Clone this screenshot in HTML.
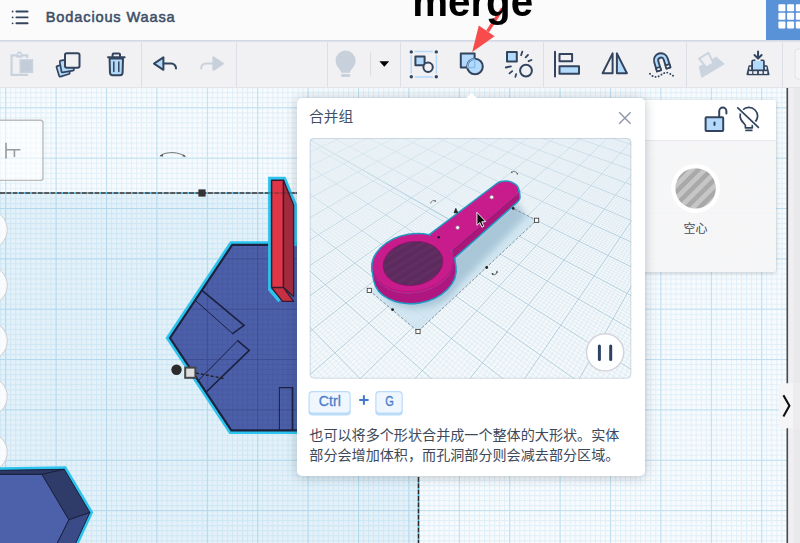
<!DOCTYPE html>
<html><head><meta charset="utf-8"><title>Tinkercad</title><style>
html,body{margin:0;padding:0;}
body{width:800px;height:543px;overflow:hidden;position:relative;background:#fff;font-family:"Liberation Sans",sans-serif;}
.abs{position:absolute;}
#hdr{left:0;top:0;width:800px;height:40px;background:#fbfbfb;}
#hdrb{left:0;top:40px;width:800px;height:2px;background:linear-gradient(#cfd4e1,#e2e5ed);}
#tb{left:0;top:42px;width:800px;height:45px;background:#f1f1f3;}
#tbb{left:0;top:87px;width:800px;height:1px;background:#e2e4ea;}
.sep{top:42px;width:1px;height:45px;background:#dddfe6;}
#title{left:45.8px;top:6.6px;font-size:14.6px;font-weight:normal;color:#3e5069;white-space:nowrap;letter-spacing:0.84px;line-height:20px;-webkit-text-stroke:0.55px #3e5069;}
#merge{left:412.2px;top:-20.5px;font-size:40.3px;font-weight:bold;color:#000;white-space:nowrap;line-height:46px;height:46px;transform:scale(1,1.05);transform-origin:0 36.9px;}
#apps{left:766px;top:0;width:34px;height:40px;background:#5a92d8;}
svg{position:absolute;left:0;top:0;overflow:visible;}
</style></head><body>
<svg id="cv" width="800" height="543" viewBox="0 0 800 543" style="z-index:0">
<defs>
<pattern id="gmin" x="5.2" y="6.6" width="5.04" height="5.035" patternUnits="userSpaceOnUse"><path d="M0.5 0V5.04M0 0.5H5.04" stroke="#e0eff8" stroke-width="1" fill="none"/></pattern>
<pattern id="gmaj" x="5.2" y="6.6" width="50.4" height="50.35" patternUnits="userSpaceOnUse"><path d="M0.5 0V50.4M0 0.5H50.4" stroke="#bfdff0" stroke-width="1.1" fill="none"/></pattern>
</defs>
<rect x="0" y="88" width="800" height="455" fill="#f8fbfd"/>
<filter id="gb" x="0" y="0" width="100%" height="100%"><feGaussianBlur stdDeviation="0.55"/></filter>
<g filter="url(#gb)"><rect x="-5" y="80" width="810" height="470" fill="url(#gmin)"/>
<rect x="-5" y="80" width="810" height="470" fill="url(#gmaj)"/></g>
<rect x="0" y="193" width="418.5" height="350" fill="rgb(100,180,228)" fill-opacity="0.135"/>
<path d="M0 193H297" stroke="#2a2a2a" stroke-width="1.6" stroke-dasharray="5 1.3" fill="none"/>
<path d="M0 193H297" stroke="#35b6e6" stroke-width="1.6" stroke-dasharray="1.3 5" stroke-dashoffset="-5" fill="none"/>
<path d="M418.5 477V543" stroke="#2a2a2a" stroke-width="1.6" stroke-dasharray="5 1.3" fill="none"/>
<path d="M418.5 477V543" stroke="#35b6e6" stroke-width="1.6" stroke-dasharray="1.3 5" stroke-dashoffset="-5" fill="none"/>
<rect x="198.4" y="189.4" width="7.2" height="7.2" fill="#333"/>
<path d="M160 155.8C164 153 168 152.6 173 152.6C178 152.8 182 154.4 185.5 156.6" stroke="#777" stroke-width="1" fill="none"/><path d="M159.4 156.2l3.4-2.2l0.4 2.4zM185.8 156.8l-3.6-0.6l1.4-2z" fill="#555"/>
<rect x="-5" y="120.2" width="48" height="60.2" rx="2.5" fill="rgba(255,255,255,0.55)" stroke="#bcbcbc" stroke-width="1.4"/>
<path d="M6 142.7V158.6M6 149.8H20.3M14.4 149.8V157" stroke="#9a9a9a" stroke-width="1.6" fill="none"/>
<circle cx="-12.3" cy="229.6" r="19.6" fill="rgba(255,255,255,0.8)" stroke="#cfcfcf" stroke-width="1"/>
<circle cx="-12.3" cy="285.3" r="19.6" fill="rgba(255,255,255,0.8)" stroke="#cfcfcf" stroke-width="1"/>
<circle cx="-12.3" cy="340.9" r="19.6" fill="rgba(255,255,255,0.8)" stroke="#cfcfcf" stroke-width="1"/>
<circle cx="-12.3" cy="396.5" r="19.6" fill="rgba(255,255,255,0.8)" stroke="#cfcfcf" stroke-width="1"/>
<circle cx="-12.3" cy="452.1" r="19.6" fill="rgba(255,255,255,0.8)" stroke="#cfcfcf" stroke-width="1"/>
<g stroke-linejoin="miter">
<path d="M232.2 244.9L170 338L231.3 430.3H300V244.9Z" fill="#4c5fa9" stroke="#2cc4ee" stroke-width="7.4"/>
<path d="M232.2 244.9L170 338L231.3 430.3H300V244.9Z" fill="#4c5fa9" stroke="#1c2340" stroke-width="2.2"/>
</g>
<defs><pattern id="hmin" x="5.2" y="6.6" width="5.04" height="5.035" patternUnits="userSpaceOnUse"><path d="M0.5 0V5.04M0 0.5H5.04" stroke="#2b3a80" stroke-width="1" fill="none"/></pattern>
<pattern id="hmaj" x="5.2" y="6.6" width="50.4" height="50.35" patternUnits="userSpaceOnUse"><path d="M0.5 0V50.4M0 0.5H50.4" stroke="#24326e" stroke-width="1.2" fill="none"/></pattern></defs>
<clipPath id="hexc"><path d="M232.8 246L171.3 338L232 429.2H300V246Z"/></clipPath>
<g clip-path="url(#hexc)"><rect x="150" y="240" width="150" height="200" fill="url(#hmin)" opacity="0.16"/><rect x="150" y="240" width="150" height="200" fill="url(#hmaj)" opacity="0.3"/></g>
<g fill="none" stroke="#1b2140" stroke-linecap="round">
<path d="M202 290.3L244 325.3" stroke-width="1.7"/><path d="M195.3 300.4L232.6 333.6" stroke-width="1"/><path d="M232.6 333.6L244 325.3" stroke-width="1.5"/>
<path d="M249.2 350.3L206.7 391.5" stroke-width="1.7"/><path d="M237.6 340.7L197.7 381.2" stroke-width="1"/><path d="M237.6 340.7L249.2 350.3" stroke-width="1.5"/>
<path d="M292.5 387.6V430" stroke-width="1.7"/><path d="M279.4 387.6V430" stroke-width="1"/><path d="M279.4 387.6H292.5" stroke-width="1.3"/>
</g>
<g stroke-linejoin="round">
<path d="M279.6 301.2L269.8 289.6V178.5H284.4L295.2 204.6V246" fill="none" stroke="#2cc4ee" stroke-width="3.4" stroke-linejoin="miter"/>
<path d="M271.6 180.2H283.5V287.6H271.6Z" fill="#e03546" stroke="#3a1a30" stroke-width="1.5"/>
<path d="M283.5 180.2L293.6 205V296.5L283.5 287.6Z" fill="#a52b3c" stroke="#3a1a30" stroke-width="1.3"/>
<path d="M271.6 287.6H283.5L293.7 301.4H282.6Z" fill="#c73042" stroke="#3a1a30" stroke-width="1.3"/>
</g>
<path d="M268 193H297" stroke="#2a2a2a" stroke-width="1.2" stroke-dasharray="5 1.3" fill="none" opacity="0.55"/>
<path d="M196 373L225 378.8" stroke="#222" stroke-width="1.4" stroke-dasharray="3 2" fill="none"/>
<circle cx="176.5" cy="369.8" r="5.2" fill="#2b2b2b"/>
<rect x="185.2" y="367.6" width="10.2" height="10.2" fill="#dedede" stroke="#454545" stroke-width="2"/>
<g stroke-linejoin="miter">
<path d="M-5 470.4L64.3 469.3L89.9 512.5L74.4 546H-5Z" fill="#2cc4ee" stroke="#2cc4ee" stroke-width="6"/>
</g><g stroke-linejoin="round">
<path d="M-5 470.4L64.3 469.3L41.9 474.4H-5Z" fill="#2d3964" stroke="#1a2140" stroke-width="1"/>
<path d="M41.9 474.4L64.3 469.3L89.9 512.5L68.8 519.8Z" fill="#2f3c69" stroke="#1a2140" stroke-width="1"/>
<path d="M68.8 519.8L89.9 512.5L74.4 546H55.7Z" fill="#3b4b88" stroke="#1a2140" stroke-width="1"/>
<path d="M-5 474.4H41.9L68.8 519.8L55.7 546H-5Z" fill="#4d60aa" stroke="#1a2140" stroke-width="1"/>
</g>
<rect x="788" y="88" width="12" height="455" fill="#efeff1"/>
<rect x="793.5" y="88" width="6.5" height="455" fill="#e9e9eb"/>
<rect x="786.5" y="88" width="1.6" height="455" fill="#4a4a4a"/>
<path d="M800 383.3H781.5a2.8 2.8 0 0 0 -2.8 2.8V425.5a2.8 2.8 0 0 0 2.8 2.8H800Z" fill="#f5f5f7"/>
<rect x="793.2" y="383.3" width="7" height="45" fill="#ececee"/>
<path d="M783.4 395.2L789.4 405.8L783.4 416.4" fill="none" stroke="#111" stroke-width="2.1"/>
</svg>
<div class="abs" style="left:600px;top:100px;width:175.5px;height:171.5px;background:rgba(245,245,247,0.94);border-radius:0 3px 3px 0;box-shadow:0 1px 4px rgba(30,40,60,0.22);z-index:1"></div>
<div class="abs" style="left:600px;top:100px;width:175.5px;height:39.5px;background:#fff;border-bottom:1px solid #e6e8ee;border-radius:0 3px 0 0;z-index:1"></div>
<svg width="800" height="543" viewBox="0 0 800 543" style="z-index:2">
<path d="M719.2 117V111.2a3.6 3.6 0 0 1 7.2 0V113.4" fill="none" stroke="#33455e" stroke-width="2" stroke-linecap="round"/>
<rect x="705.6" y="117.2" width="17.6" height="13.8" rx="0.8" fill="#b3d9fb" stroke="#33455e" stroke-width="2"/>
<rect x="713.5" y="121.5" width="2" height="4.6" rx="1" fill="#33455e"/>
<path d="M745.4 127.8V125.6C745.4 123.6 740.1 121.6 740.1 116.2a8.75 8.75 0 0 1 17.5 0C757.6 121.6 752.3 123.6 752.3 125.6V127.8Z" fill="none" stroke="#33455e" stroke-width="1.7" stroke-linejoin="round"/>
<path d="M746 130.4H751.8" stroke="#33455e" stroke-width="1.7" stroke-linecap="round"/>
<path d="M737.8 107.8L758.4 127.4" stroke="#fff" stroke-width="4.6"/><path d="M737.8 107.8L758.4 127.4" stroke="#33455e" stroke-width="1.7" stroke-linecap="round"/>
<defs><pattern id="stripe" width="9.2" height="9.2" patternUnits="userSpaceOnUse" patternTransform="rotate(-45 695.6 188.4)"><rect width="9.2" height="9.2" fill="#c6c6c6"/><rect y="0" width="9.2" height="4.6" fill="#a9a9a9"/></pattern></defs>
<circle cx="695.6" cy="188.4" r="24.5" fill="#fff"/><circle cx="695.6" cy="188.4" r="20.2" fill="url(#stripe)"/>
<text x="683.5" y="233.4" font-family="'Liberation Sans','Noto Sans CJK SC',sans-serif" font-size="12" fill="#434c5a">空心</text>
</svg>
<div id="hdr" class="abs" style="z-index:3"></div><div id="hdrb" class="abs" style="z-index:3"></div>
<div id="tb" class="abs" style="z-index:3"></div><div id="tbb" class="abs" style="z-index:3"></div>
<div class="abs sep" style="left:140.6px;z-index:3"></div>
<div class="abs sep" style="left:236.0px;z-index:3"></div>
<div class="abs sep" style="left:327.0px;z-index:3"></div>
<div class="abs sep" style="left:399.6px;z-index:3"></div>
<div class="abs sep" style="left:543.0px;z-index:3"></div>
<div class="abs sep" style="left:686.0px;z-index:3"></div>
<div class="abs sep" style="left:782.3px;z-index:3"></div>
<div id="title" class="abs" style="z-index:4">Bodacious Waasa</div>
<div id="apps" class="abs" style="z-index:4"></div>
<div id="merge" class="abs" style="z-index:7">merge</div>
<svg id="ico" width="800" height="543" viewBox="0 0 800 543" style="z-index:5">
<path d="M16.4 11.5H27.6" stroke="#33455e" stroke-width="1.9" stroke-linecap="round"/><circle cx="12.6" cy="11.5" r="0.9" fill="#33455e"/>
<path d="M16.4 17.4H27.6" stroke="#33455e" stroke-width="1.9" stroke-linecap="round"/><circle cx="12.6" cy="17.4" r="0.9" fill="#33455e"/>
<path d="M16.4 23.3H27.6" stroke="#33455e" stroke-width="1.9" stroke-linecap="round"/><circle cx="12.6" cy="23.3" r="0.9" fill="#33455e"/>
<rect x="778.4" y="4.2" width="7" height="7" rx="0.8" fill="#fff"/>
<rect x="787.1" y="4.2" width="7" height="7" rx="0.8" fill="#fff"/>
<rect x="795.8" y="4.2" width="7" height="7" rx="0.8" fill="#fff"/>
<rect x="778.4" y="12.8" width="7" height="7" rx="0.8" fill="#fff"/>
<rect x="787.1" y="12.8" width="7" height="7" rx="0.8" fill="#fff"/>
<rect x="795.8" y="12.8" width="7" height="7" rx="0.8" fill="#fff"/>
<rect x="778.4" y="21.4" width="7" height="7" rx="0.8" fill="#fff"/>
<rect x="787.1" y="21.4" width="7" height="7" rx="0.8" fill="#fff"/>
<rect x="795.8" y="21.4" width="7" height="7" rx="0.8" fill="#fff"/>
<path d="M27.2 58V55.4H11.55V74.85H28.1" fill="none" stroke="#c8d2dd" stroke-width="2.1" stroke-linejoin="miter"/>
<rect x="16.9" y="51.4" width="4.9" height="6.2" rx="2.2" fill="#c8d2dd"/><rect x="16.1" y="54.6" width="6.4" height="3" rx="0.6" fill="#c8d2dd"/>
<rect x="17.9" y="53.5" width="2.9" height="1.8" rx="0.9" fill="#eceef2"/>
<rect x="19.5" y="59.1" width="13.7" height="14" fill="#c9d3de"/><rect x="21" y="60.6" width="10.7" height="11" fill="#c3cdd9"/>
<g stroke="#33455e" stroke-width="1.7" stroke-linejoin="round">
<rect x="57.6" y="64.6" width="11" height="11" rx="1" fill="#b3d9fb" transform="rotate(-17 63 70)"/>
<rect x="60.6" y="59.6" width="12.6" height="12" rx="1" fill="#b3d9fb" transform="rotate(-10 67 66)"/>
<rect x="65" y="53.2" width="14.5" height="14.6" rx="1.8" fill="#f1f1f3" stroke-width="2"/>
</g>
<g stroke="#33455e" stroke-width="2" stroke-linejoin="round" stroke-linecap="round">
<path d="M112.6 56.6V54.6a1 1 0 0 1 1 -1H119a1 1 0 0 1 1 1V56.6" fill="none"/>
<path d="M109.6 58.6H123L122.6 72.6a2.6 2.6 0 0 1 -2.6 2.6H112.6a2.6 2.6 0 0 1 -2.6 -2.6Z" fill="#b3d9fb"/>
<path d="M108 57.2H124.6" fill="none"/>
<path d="M113.8 62V71.4M118.8 62V71.4" stroke-width="1.5" fill="none"/>
</g>
<g stroke="#33455e" stroke-width="2" stroke-linejoin="round" stroke-linecap="round">
<path d="M154 63.6L163.4 57.4V69.8Z" fill="#b3d9fb"/>
<path d="M163.6 63.6H171.4a4.6 4.6 0 0 1 4.6 4.6V68.4" fill="none"/>
</g>
<g stroke="#c7d0db" stroke-width="2" stroke-linejoin="round" stroke-linecap="round">
<path d="M222.8 63.6L213.4 57.4V69.8Z" fill="#c7d0db"/>
<path d="M213.2 63.6H205.8a4.6 4.6 0 0 0 -4.6 4.6V68.4" fill="none"/>
</g>
<g fill="#c7d0db">
<path d="M341.2 72.8C341 69.5 335.6 67 335.6 60.6a10 10 0 0 1 20 0C355.6 67 350.2 69.5 350 72.8Z"/>
<rect x="341" y="74" width="9.4" height="2.9" rx="1.4"/>
</g>
<rect x="370.1" y="52.5" width="1" height="23" fill="#d9dbe2"/>
<path d="M379.4 61.2H389.2L384.3 66.8Z" fill="#000"/>
<g stroke="#b3d9fb" stroke-width="1.5" fill="none" stroke-linecap="round"><path d="M415.2 51.6H432.4M415.2 77H432.4M411.2 55.6V73M436.4 55.6V73"/></g>
<circle cx="411.3" cy="51.9" r="1.7" fill="#33455e"/>
<circle cx="436.3" cy="51.9" r="1.7" fill="#33455e"/>
<circle cx="411.3" cy="76.7" r="1.7" fill="#33455e"/>
<circle cx="436.3" cy="76.7" r="1.7" fill="#33455e"/>
<rect x="415.4" y="56.6" width="9.2" height="8.6" fill="#b3d9fb" stroke="#33455e" stroke-width="2" stroke-linejoin="round"/>
<circle cx="428.1" cy="67.3" r="4.7" fill="#f1f1f3" stroke="#33455e" stroke-width="2"/>
<rect x="460.8" y="53.5" width="13.8" height="14" fill="#b3d9fb" stroke="#33455e" stroke-width="2" stroke-linejoin="round"/>
<circle cx="475" cy="66.5" r="7.8" fill="#b3d9fb" stroke="#33455e" stroke-width="2"/>
<path d="M474.6 59V67.5H467.4" fill="none" stroke="#86bff2" stroke-width="1.4"/>
<path d="M467.4 67.5a7.6 7.6 0 0 1 7.2 -8.6" fill="none" stroke="#86bff2" stroke-width="1.2"/>
<rect x="507" y="52" width="9.8" height="9.5" fill="#b3d9fb" stroke="#33455e" stroke-width="2" stroke-linejoin="round"/>
<circle cx="526" cy="70.6" r="5.9" fill="none" stroke="#33455e" stroke-width="2"/>
<path d="M522.3 51.6L521.1 55.2M528 54.9L525.7 57.4M531.5 60L528.6 61.2M505.8 67.5L510.9 66.3M509.5 73.4L512.2 71.1M515.4 76.8L516.2 74.1" stroke="#33455e" stroke-width="1.8" stroke-linecap="round" fill="none"/>
<path d="M555 51.8V76.4" stroke="#33455e" stroke-width="2" stroke-linecap="round"/>
<rect x="559.5" y="54.1" width="12.6" height="7.2" fill="#f1f1f3" stroke="#33455e" stroke-width="2" stroke-linejoin="round"/>
<rect x="559.5" y="66.2" width="19.5" height="7.6" fill="#b3d9fb" stroke="#33455e" stroke-width="2" stroke-linejoin="round"/>
<path d="M612.6 53.4V73.2H602.6Z" fill="#f1f1f3" stroke="#33455e" stroke-width="2" stroke-linejoin="round"/>
<path d="M616.9 53.4V73.2H626.9Z" fill="#b3d9fb" stroke="#33455e" stroke-width="2" stroke-linejoin="round"/>
<g transform="rotate(-17 661 60.4)">
<path d="M654 69.8V60.2a7 7 0 0 1 14 0V69.8H663.8V60.4a2.8 2.8 0 0 0 -5.6 0V69.8Z" fill="#b3d9fb" stroke="#33455e" stroke-width="1.9" stroke-linejoin="round"/>
<rect x="654" y="66.4" width="4.2" height="3.4" fill="#fff" stroke="#33455e" stroke-width="1.7" stroke-linejoin="round"/>
<rect x="663.8" y="66.4" width="4.2" height="3.4" fill="#fff" stroke="#33455e" stroke-width="1.7" stroke-linejoin="round"/>
</g>
<path d="M650 73.8C653 77.4 657 77.6 660 75.6C663 73.6 665.4 71.6 668.4 73C670.6 74 672.6 75.4 674.4 76.6" fill="none" stroke="#33455e" stroke-width="1.9" stroke-linecap="round" stroke-dasharray="0.1 3.1"/>
<path d="M699.2 66.8L716.4 57.2L724.2 64L701.8 77.3Z" fill="#cbd4de" stroke="#cbd4de" stroke-width="1" stroke-linejoin="round"/>
<path d="M699.1 58.6L708.4 52.9L713.5 63.3L706.2 67.4Z" fill="#efeff3" stroke="#cbd4de" stroke-width="2" stroke-linejoin="round"/>
<g stroke="#33455e" stroke-width="2" stroke-linecap="round" stroke-linejoin="round" fill="none">
<path d="M758.05 51.5V58.2M754.5 55L758.05 58.6L761.6 55"/>
</g>
<path d="M749.3 66.1H766.7L768.6 74.3H747.4Z" fill="#33455e" stroke="#33455e" stroke-width="1.8" stroke-linejoin="round"/>
<path d="M752.2 70V61.4a1 1 0 0 1 1 -1H755.4M763.8 70V61.4a1 1 0 0 0 -1 -1H760.6" fill="none" stroke="#33455e" stroke-width="2" stroke-linejoin="round"/>
<rect x="753" y="61" width="10.1" height="8.8" fill="#b3d9fb"/>
<rect x="752.2" y="69.6" width="11.6" height="1.2" fill="#33455e"/>
<rect x="748.8" y="71.2" width="3.4" height="2.7" fill="#eef0f4"/>
<rect x="753.4" y="71.2" width="3.7" height="2.7" fill="#eef0f4"/>
<rect x="758.9" y="71.2" width="3.6" height="2.7" fill="#eef0f4"/>
<rect x="763.9" y="71.2" width="3.4" height="2.7" fill="#eef0f4"/>
<rect x="749.4" y="66.8" width="1.7" height="2.8" fill="#eef0f4"/><rect x="764.9" y="66.8" width="1.7" height="2.8" fill="#eef0f4"/>
<rect x="795" y="49" width="12" height="30" rx="3" fill="#f5f5f7" stroke="#e2e2e8" stroke-width="1"/>
</svg>
<svg width="800" height="543" viewBox="0 0 800 543" style="z-index:6"><path d="M502.5 8.5L487.6 31.4" stroke="#f84b4b" stroke-width="3.4" fill="none"/><path d="M472.2 52L478.8 25.6L494.6 36.2Z" fill="#f84b4b"/></svg>
<div class="abs" style="left:297.3px;top:98.4px;width:347.4px;height:378px;background:#fff;border-radius:5px;box-shadow:0 1px 11px rgba(40,60,80,0.30);z-index:8"></div>
<svg width="800" height="543" viewBox="0 0 800 543" style="z-index:9">
<path d="M465.6 98.9L471.6 92.4L477.6 98.9Z" fill="#fff"/>
<text x="309" y="122" font-family="'Liberation Sans','Noto Sans CJK SC',sans-serif" font-size="14.7" fill="#405068">合并组</text>
<path d="M619.2 112.3L630.6 123.7M630.6 112.3L619.2 123.7" stroke="#8f98a7" stroke-width="1.4" fill="none"/>
<defs><clipPath id="imgc"><rect x="309.7" y="138.0" width="321.6" height="240.7" rx="4"/></clipPath>
<filter id="b1" x="-5%" y="-5%" width="110%" height="110%"><feGaussianBlur stdDeviation="0.45"/></filter>
<filter id="b3" x="-20%" y="-20%" width="140%" height="140%"><feGaussianBlur stdDeviation="3"/></filter>
<pattern id="hstripe" width="7" height="7" patternUnits="userSpaceOnUse" patternTransform="rotate(-22)"><rect width="7" height="7" fill="#5b2b5d"/><rect width="7" height="3.2" fill="#602f61"/></pattern>
</defs>
<g clip-path="url(#imgc)">
<rect x="309.7" y="138.0" width="321.6" height="240.7" fill="#f3f8fb"/>
<path d="M307.7 136.3L308.3 136.0M307.7 137.4L310.9 136.0M307.7 138.5L313.6 136.0M307.7 139.7L316.2 136.0M307.7 142.0L321.5 136.0M307.7 143.2L324.2 136.0M307.7 144.4L326.8 136.0M307.7 145.6L329.4 136.0M307.7 146.8L332.1 136.0M307.7 148.0L334.7 136.0M307.7 149.3L337.4 136.0M307.7 150.5L340.0 136.0M307.7 151.8L342.7 136.0M307.7 154.4L347.9 136.0M307.7 155.7L350.6 136.0M307.7 157.1L353.2 136.0M307.7 158.4L355.9 136.0M307.7 159.8L358.5 136.0M307.7 161.1L361.2 136.0M307.7 162.5L363.8 136.0M307.7 163.9L366.4 136.0M307.7 165.3L369.1 136.0M307.7 168.2L374.4 136.0M307.7 169.7L377.0 136.0M307.7 171.2L379.7 136.0M307.7 172.7L382.3 136.0M307.7 174.2L385.0 136.0M307.7 175.7L387.6 136.0M307.7 177.3L390.2 136.0M307.7 178.9L392.9 136.0M307.7 180.5L395.5 136.0M307.7 183.7L400.8 136.0M307.7 185.3L403.5 136.0M307.7 187.0L406.1 136.0M307.7 188.7L408.7 136.0M307.7 190.4L411.4 136.0M307.7 192.1L414.0 136.0M307.7 193.9L416.7 136.0M307.7 195.7L419.3 136.0M307.7 197.5L422.0 136.0M307.7 201.1L427.2 136.0M307.7 203.0L429.9 136.0M307.7 204.9L432.5 136.0M307.7 206.8L435.2 136.0M307.7 208.8L437.8 136.0M307.7 210.7L440.5 136.0M307.7 212.7L443.1 136.0M307.7 214.7L445.7 136.0M307.7 216.8L448.4 136.0M307.7 221.0L453.7 136.0M307.7 223.1L456.3 136.0M307.7 225.3L459.0 136.0M307.7 227.4L461.6 136.0M307.7 229.7L464.3 136.0M307.7 231.9L466.9 136.0M307.7 234.2L469.5 136.0M307.7 236.5L472.2 136.0M307.7 238.9L474.8 136.0M307.7 243.7L480.1 136.0M307.7 246.1L482.8 136.0M307.7 248.6L485.4 136.0M307.7 251.1L488.0 136.0M307.7 253.7L490.7 136.0M307.7 256.3L493.3 136.0M307.7 259.0L496.0 136.0M307.7 261.7L498.6 136.0M307.7 264.4L501.3 136.0M307.7 270.0L506.5 136.0M307.7 272.8L509.2 136.0M307.7 275.7L511.8 136.0M307.7 278.7L514.5 136.0M307.7 281.7L517.1 136.0M307.7 284.7L519.8 136.0M307.7 287.8L522.4 136.0M307.7 291.0L525.0 136.0M307.7 294.2L527.7 136.0M307.7 300.8L533.0 136.0M307.7 304.1L535.6 136.0M307.7 307.6L538.3 136.0M307.7 311.0L540.9 136.0M307.7 314.6L543.6 136.0M307.7 318.2L546.2 136.0M307.7 321.9L548.8 136.0M307.7 325.6L551.5 136.0M307.7 329.5L554.1 136.0M307.7 337.3L559.4 136.0M307.7 341.3L562.1 136.0M307.7 345.5L564.7 136.0M307.7 349.6L567.3 136.0M307.7 353.9L570.0 136.0M307.7 358.3L572.6 136.0M307.7 362.7L575.3 136.0M307.7 367.2L577.9 136.0M307.7 371.9L580.6 136.0M308.5 380.7L585.8 136.0M314.0 380.7L588.5 136.0M319.5 380.7L591.1 136.0M325.0 380.7L593.8 136.0M330.5 380.7L596.4 136.0M336.0 380.7L599.1 136.0M341.5 380.7L601.7 136.0M347.0 380.7L604.3 136.0M352.5 380.7L607.0 136.0M363.5 380.7L612.3 136.0M369.1 380.7L614.9 136.0M374.6 380.7L617.6 136.0M380.1 380.7L620.2 136.0M385.6 380.7L622.9 136.0M391.1 380.7L625.5 136.0M396.6 380.7L628.1 136.0M402.1 380.7L630.8 136.0M407.6 380.7L633.1 136.4M418.6 380.7L633.3 142.0M424.1 380.7L633.3 145.1M429.6 380.7L633.3 148.2M435.1 380.7L633.3 151.4M440.6 380.7L633.3 154.7M446.1 380.7L633.3 158.1M451.6 380.7L633.3 161.6M457.1 380.7L633.3 165.2M462.6 380.7L633.3 169.0M473.7 380.7L633.3 176.7M479.2 380.7L633.3 180.7M484.7 380.7L633.3 184.9M490.2 380.7L633.3 189.2M495.7 380.7L633.3 193.7M501.2 380.7L633.3 198.2M506.7 380.7L633.3 203.0M512.2 380.7L633.3 207.9M517.7 380.7L633.3 212.9M528.7 380.7L633.3 223.6M534.2 380.7L633.3 229.2M539.7 380.7L633.3 235.0M545.2 380.7L633.3 241.0M550.7 380.7L633.3 247.3M556.2 380.7L633.3 253.8M561.7 380.7L633.3 260.5M567.2 380.7L633.3 267.5M572.8 380.7L633.3 274.9M583.8 380.7L633.3 290.4M589.3 380.7L633.3 298.7M594.8 380.7L633.3 307.4M600.3 380.7L633.3 316.4M605.8 380.7L633.3 325.9M611.3 380.7L633.3 335.8M616.8 380.7L633.3 346.2M622.3 380.7L633.3 357.1M627.8 380.7L633.3 368.6M307.7 375.9L311.9 380.7M307.7 367.9L319.0 380.7M307.7 360.2L326.2 380.7M307.7 352.7L333.4 380.7M307.7 345.4L340.6 380.7M307.7 338.4L347.7 380.7M307.7 331.6L354.9 380.7M307.7 318.7L369.2 380.7M307.7 312.5L376.4 380.7M307.7 306.5L383.6 380.7M307.7 300.7L390.8 380.7M307.7 295.1L397.9 380.7M307.7 289.6L405.1 380.7M307.7 284.2L412.3 380.7M307.7 279.1L419.4 380.7M307.7 274.0L426.6 380.7M307.7 264.3L441.0 380.7M307.7 259.7L448.1 380.7M307.7 255.1L455.3 380.7M307.7 250.7L462.5 380.7M307.7 246.4L469.6 380.7M307.7 242.2L476.8 380.7M307.7 238.1L484.0 380.7M307.7 234.1L491.2 380.7M307.7 230.2L498.3 380.7M307.7 222.7L512.7 380.7M307.7 219.1L519.8 380.7M307.7 215.5L527.0 380.7M307.7 212.1L534.2 380.7M307.7 208.7L541.4 380.7M307.7 205.4L548.5 380.7M307.7 202.1L555.7 380.7M307.7 199.0L562.9 380.7M307.7 195.9L570.0 380.7M307.7 189.8L584.4 380.7M307.7 186.9L591.6 380.7M307.7 184.1L598.7 380.7M307.7 181.3L605.9 380.7M307.7 178.6L613.1 380.7M307.7 175.9L620.2 380.7M307.7 173.2L627.4 380.7M307.7 170.7L633.3 379.9M307.7 168.1L633.3 375.3M307.7 163.2L633.3 366.5M307.7 160.8L633.3 362.2M307.7 158.5L633.3 357.9M307.7 156.2L633.3 353.8M307.7 154.0L633.3 349.7M307.7 151.7L633.3 345.7M307.7 149.6L633.3 341.8M307.7 147.4L633.3 338.0M307.7 145.3L633.3 334.2M307.7 141.2L633.3 326.8M307.7 139.2L633.3 323.2M307.7 137.3L633.3 319.7M308.9 136.1L633.3 316.2M312.3 136.0L633.3 312.8M315.7 136.0L633.3 309.5M319.2 136.0L633.3 306.2M322.6 136.0L633.3 302.9M326.1 136.0L633.3 299.7M332.9 136.0L633.3 293.5M336.4 136.0L633.3 290.5M339.8 136.0L633.3 287.5M343.3 136.0L633.3 284.5M346.7 136.0L633.3 281.6M350.2 136.0L633.3 278.8M353.6 136.0L633.3 276.0M357.0 136.0L633.3 273.2M360.5 136.0L633.3 270.5M367.4 136.0L633.3 265.1M370.8 136.0L633.3 262.5M374.3 136.0L633.3 260.0M377.7 136.0L633.3 257.4M381.1 136.0L633.3 254.9M384.6 136.0L633.3 252.5M388.0 136.0L633.3 250.0M391.5 136.0L633.3 247.7M394.9 136.0L633.3 245.3M401.8 136.0L633.3 240.7M405.3 136.0L633.3 238.4M408.7 136.0L633.3 236.2M412.1 136.0L633.3 234.0M415.6 136.0L633.3 231.8M419.0 136.0L633.3 229.7M422.5 136.0L633.3 227.5M425.9 136.0L633.3 225.5M429.4 136.0L633.3 223.4M436.2 136.0L633.3 219.4M439.7 136.0L633.3 217.4M443.1 136.0L633.3 215.4M446.6 136.0L633.3 213.5M450.0 136.0L633.3 211.6M453.5 136.0L633.3 209.7M456.9 136.0L633.3 207.8M460.3 136.0L633.3 206.0M463.8 136.0L633.3 204.2M470.7 136.0L633.3 200.6M474.1 136.0L633.3 198.9M477.6 136.0L633.3 197.2M481.0 136.0L633.3 195.4M484.4 136.0L633.3 193.8M487.9 136.0L633.3 192.1M491.3 136.0L633.3 190.4M494.8 136.0L633.3 188.8M498.2 136.0L633.3 187.2M505.1 136.0L633.3 184.0M508.6 136.0L633.3 182.5M512.0 136.0L633.3 180.9M515.4 136.0L633.3 179.4M518.9 136.0L633.3 177.9M522.3 136.0L633.3 176.4M525.8 136.0L633.3 175.0M529.2 136.0L633.3 173.5M532.7 136.0L633.3 172.1M539.5 136.0L633.3 169.2M543.0 136.0L633.3 167.8M546.4 136.0L633.3 166.5M549.9 136.0L633.3 165.1M553.3 136.0L633.3 163.8M556.8 136.0L633.3 162.4M560.2 136.0L633.3 161.1M563.6 136.0L633.3 159.8M567.1 136.0L633.3 158.5M574.0 136.0L633.3 156.0M577.4 136.0L633.3 154.7M580.9 136.0L633.3 153.5M584.3 136.0L633.3 152.2M587.7 136.0L633.3 151.0M591.2 136.0L633.3 149.8M594.6 136.0L633.3 148.6M598.1 136.0L633.3 147.4M601.5 136.0L633.3 146.3M608.4 136.0L633.3 144.0M611.9 136.0L633.3 142.8M615.3 136.0L633.3 141.7M618.7 136.0L633.3 140.6M622.2 136.0L633.3 139.5M625.6 136.0L633.3 138.4M629.1 136.0L633.3 137.3M632.5 136.0L633.3 136.2" stroke="#d3e3ed" stroke-width="0.5" fill="none"/>
<path d="M307.7 140.8L318.9 136.0M307.7 153.1L345.3 136.0M307.7 166.8L371.7 136.0M307.7 182.1L398.2 136.0M307.7 199.3L424.6 136.0M307.7 218.9L451.0 136.0M307.7 241.3L477.5 136.0M307.7 267.1L503.9 136.0M307.7 297.4L530.3 136.0M307.7 333.3L556.8 136.0M307.7 376.6L583.2 136.0M358.0 380.7L609.6 136.0M413.1 380.7L633.3 139.0M468.2 380.7L633.3 172.8M523.2 380.7L633.3 218.1M578.3 380.7L633.3 282.5M307.7 325.1L362.1 380.7M307.7 269.1L433.8 380.7M307.7 226.4L505.5 380.7M307.7 192.8L577.2 380.7M307.7 165.7L633.3 370.8M307.7 143.3L633.3 330.5M329.5 136.0L633.3 296.6M363.9 136.0L633.3 267.8M398.4 136.0L633.3 243.0M432.8 136.0L633.3 221.4M467.2 136.0L633.3 202.4M501.7 136.0L633.3 185.6M536.1 136.0L633.3 170.6M570.5 136.0L633.3 157.2M605.0 136.0L633.3 145.1" stroke="#adcbdb" stroke-width="0.9" fill="none"/>
<path d="M308 138.7L448 218.8" stroke="#9dc2d6" stroke-width="1.1" fill="none"/>
<linearGradient id="fade" x1="0" y1="0" x2="0.25" y2="1"><stop offset="0" stop-color="#ecf3f8" stop-opacity="0.75"/><stop offset="0.6" stop-color="#ecf3f8" stop-opacity="0"/></linearGradient>
<rect x="309.7" y="138.0" width="321.6" height="240.7" fill="url(#fade)"/>
<g filter="url(#b1)">
<path d="M369.3 290.4L418 331.5L536.6 220.3L491 197Z" fill="#cde4f0" fill-opacity="0.85"/>
<path d="M385 296C400 314 442 314 458 286L526 216L516 200L452 256Z" fill="#8fb1c8" opacity="0.6" filter="url(#b3)"/>
<path d="M369.3 290.4L418 331.5L536.6 220.3L513.2 208.4" fill="none" stroke="#70808c" stroke-width="0.8" stroke-dasharray="3 1.6"/>
<g stroke="#219bc4" stroke-width="3" stroke-linejoin="round" fill="#219bc4">
<path transform="rotate(-9.5 413.2 263.8)" d="M372.2 263.8a41 29.2 0 0 0 82 0v9.7a41 29.2 0 0 1 -82 0z"/>
<ellipse transform="rotate(-9.5 413.2 263.8)" cx="413.2" cy="263.8" rx="41" ry="29.2"/>
<path d="M452.1 250.6L514.9 196.6C517.4 194.8 518.6 193.2 518.8 191.6L519.3 197.6C519.1 199.4 518.1 200.6 516.9 201.6L453.2 258.2Z"/><path d="M430 235L496.5 184.6C501.4 180.8 509.9 180.8 514.8 184.8C519.2 188.2 519.4 193.2 514.9 196.6L452.1 250.6Z"/>
</g>
<path transform="rotate(-9.5 413.2 263.8)" d="M372.2 263.8a41 29.2 0 0 0 82 0v9.7a41 29.2 0 0 1 -82 0z" fill="#b01580"/>
<path d="M452.1 250.6L514.9 196.6C517.4 194.8 518.6 193.2 518.8 191.6L519.3 197.6C519.1 199.4 518.1 200.6 516.9 201.6L453.2 258.2Z" fill="#ad1479"/>
<path d="M430 235L496.5 184.6C501.4 180.8 509.9 180.8 514.8 184.8C519.2 188.2 519.4 193.2 514.9 196.6L452.1 250.6Z" fill="#c81b8d"/>
<ellipse transform="rotate(-9.5 413.2 263.8)" cx="413.2" cy="263.8" rx="41" ry="29.2" fill="#c81b8d"/>
<path transform="rotate(-9.5 413.2 263.8)" d="M372.4 265a41 29.2 0 0 0 81.6 0" fill="none" stroke="#9c0f6e" stroke-width="0.7" opacity="0.6"/>
<path d="M452.4 250.9L515 197" fill="none" stroke="#8c0c62" stroke-width="0.7" opacity="0.6"/>
<g transform="rotate(-9.5 413 263.5)">
<ellipse cx="413" cy="263.5" rx="30" ry="21.8" fill="url(#hstripe)" stroke="#8a1468" stroke-width="0.8"/>
</g>
<circle cx="491.7" cy="197.2" r="1.9" fill="#fff" stroke="#8a6a80" stroke-width="0.7"/>
<circle cx="457.6" cy="227.6" r="1.9" fill="#fff" stroke="#8a6a80" stroke-width="0.7"/>
<circle cx="438.7" cy="237.3" r="1.3" fill="#3a1030"/>
<path d="M454 212.8L455.8 208.4L457.8 212.8Z" fill="#222" stroke="#222" stroke-width="0.8" stroke-linejoin="round"/>
<rect x="367.2" y="288.3" width="4.2" height="4.2" fill="#fff" stroke="#444" stroke-width="0.9"/>
<rect x="415.9" y="329.4" width="4.2" height="4.2" fill="#fff" stroke="#444" stroke-width="0.9"/>
<rect x="534.5" y="218.2" width="4.2" height="4.2" fill="#fff" stroke="#444" stroke-width="0.9"/>
<circle cx="392.6" cy="309.7" r="1.4" fill="#222"/>
<circle cx="486.7" cy="267.5" r="1.4" fill="#222"/>
<circle cx="513.2" cy="208.4" r="1.4" fill="#222"/>
<path d="M430.6 203.6C431 201 433.4 199.8 435.4 200.8" fill="none" stroke="#666" stroke-width="0.8"/><path d="M436.4 201.6l-2.2 0.2l1-1.8z" fill="#555"/>
<path d="M511.6 172.4C513.4 170.8 516.4 171.4 517.4 173.8" fill="none" stroke="#666" stroke-width="0.8"/><path d="M517.8 175l-1.6-1.4l1.8-0.6z" fill="#555"/><path d="M511 173.2l0.4-2l1.4 1.4z" fill="#555"/>
<path d="M492.2 274C494 275.4 496.6 274.6 497 271.8" fill="none" stroke="#444" stroke-width="0.9"/><path d="M491.4 273l2.2 0.2l-1 1.8zM497 270.4l1 2l-2 0z" fill="#333"/>
<path d="M453.4 254.4V257.6" stroke="#555" stroke-width="0.7"/>
<path d="M476.9 212.3V225.2L479.8 222.6L481.8 227.2L483.8 226.3L481.8 221.8L485.8 221.6Z" fill="#111" stroke="#fff" stroke-width="0.9" stroke-linejoin="round"/>
</g>
<circle cx="605.1" cy="352.3" r="18.6" fill="rgba(255,255,255,0.94)" stroke="#d3d3da" stroke-width="1.4"/>
<path d="M599.4 346V359.4M610.7 346V359.4" stroke="#2b4260" stroke-width="3" stroke-linecap="round"/>
</g>
<rect x="310.2" y="138.5" width="320.6" height="239.7" rx="4" fill="none" stroke="#9fb3c2" stroke-opacity="0.4" stroke-width="1"/>
<rect x="308.5" y="391" width="42.2" height="24.4" rx="4" fill="#b9dcfa"/>
<rect x="309.7" y="392.2" width="39.8" height="20.4" rx="3" fill="#eff6fe"/>
<text x="318.8" y="405.8" font-family="Liberation Sans, sans-serif" font-size="14.2" fill="#4b7fca" textLength="22.0" lengthAdjust="spacingAndGlyphs" stroke="#4b7fca" stroke-width="0.3">Ctrl</text>
<rect x="375.3" y="391" width="27.5" height="24.4" rx="4" fill="#b9dcfa"/>
<rect x="376.5" y="392.2" width="25.1" height="20.4" rx="3" fill="#eff6fe"/>
<text x="385.2" y="405.8" font-family="Liberation Sans, sans-serif" font-size="14.2" fill="#4b7fca" textLength="8.6" lengthAdjust="spacingAndGlyphs" stroke="#4b7fca" stroke-width="0.3">G</text>
<path d="M359.2 400H368.6M363.9 395.3V404.7" stroke="#3f78c8" stroke-width="2" fill="none"/>
<text x="309.3" y="439.6" font-family="'Liberation Sans','Noto Sans CJK SC',sans-serif" font-size="14.1" fill="#3d495b">也可以将多个形状合并成一个整体的大形状。实体</text>
<text x="309.3" y="459.7" font-family="'Liberation Sans','Noto Sans CJK SC',sans-serif" font-size="14.1" fill="#3d495b">部分会增加体积，而孔洞部分则会减去部分区域。</text>
</svg>
</body></html>
